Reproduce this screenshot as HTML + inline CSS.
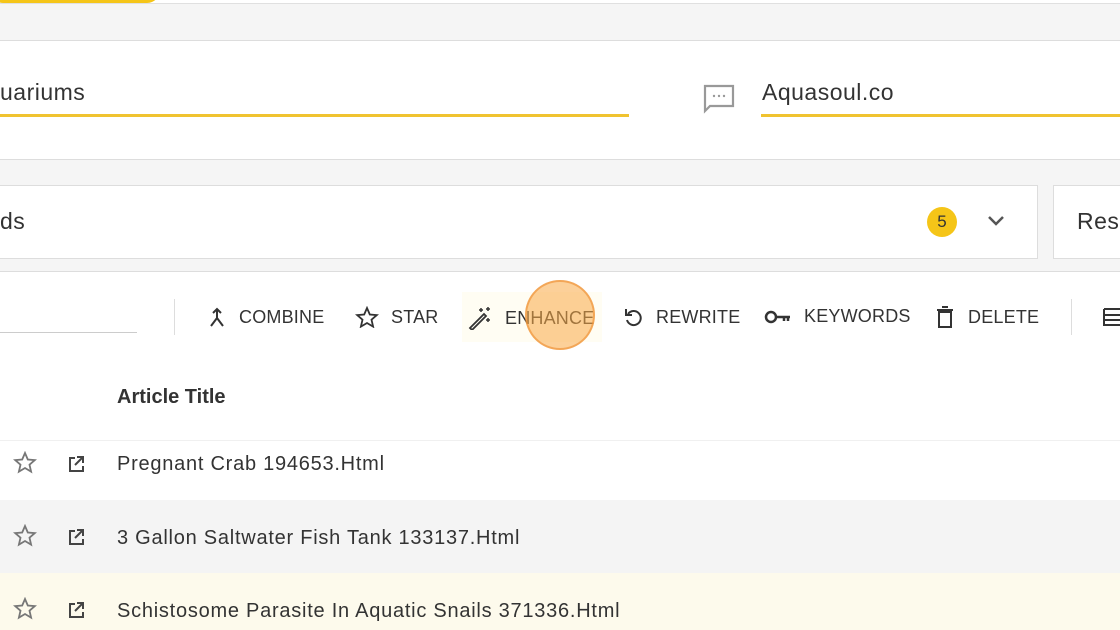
<!DOCTYPE html>
<html><head><style>
body{margin:0;width:1120px;height:630px;overflow:hidden;background:#fff;font-family:"Liberation Sans",sans-serif;color:#333;position:relative}
.a{position:absolute}
.btn{position:absolute;top:306px;font-size:18px;color:#333;display:flex;align-items:center;gap:12px;letter-spacing:0.2px}
.big{font-size:23px;letter-spacing:0.5px}
.row{font-size:20px;letter-spacing:0.75px}
svg{display:block}
</style></head><body>
<div class="a" style="left:0;width:1120px;background:#f5f5f5;border-top:1px solid #e0e0e0;border-bottom:1px solid #ddd;box-sizing:border-box;top:3px;height:38px"></div>
<div class="a" style="left:-10px;top:-10px;width:170px;height:13px;background:#f5c518;border-radius:0 0 40px 40px"></div>
<div class="a big" style="left:0;top:79px">uariums</div>
<div class="a" style="left:0;top:114px;width:629px;height:3px;background:#f0c330"></div>
<svg class="a" style="left:703px;top:84px" width="32" height="30" viewBox="0 0 32 30"><path d="M2 2h28v20H7l-5 5z" fill="none" stroke="#999" stroke-width="2.2"/><circle cx="11" cy="12" r="1.2" fill="#999"/><circle cx="16" cy="12" r="1.2" fill="#999"/><circle cx="21" cy="12" r="1.2" fill="#999"/></svg>
<div class="a big" style="left:762px;top:79px">Aquasoul.co</div>
<div class="a" style="left:761px;top:114px;width:360px;height:3px;background:#f0c330"></div>
<div class="a" style="left:0;top:159px;width:1120px;height:113px;background:#f5f5f5;border-top:1px solid #ddd;border-bottom:1px solid #ddd;box-sizing:border-box"></div>
<div class="a" style="left:-2px;top:185px;width:1040px;height:74px;background:#fff;border:1px solid #ddd;box-sizing:border-box"></div>
<div class="a" style="left:1053px;top:185px;width:80px;height:74px;background:#fff;border:1px solid #ddd;box-sizing:border-box"></div>
<div class="a big" style="left:0;top:208px">ds</div>
<div class="a big" style="left:1077px;top:208px">Res</div>
<div class="a" style="left:927px;top:207px;width:30px;height:30px;border-radius:50%;background:#f5c518;font-size:17px;text-align:center;line-height:30px">5</div>
<svg class="a" style="left:986px;top:214px" width="20" height="14"><path d="M3 3l7 7 7-7" fill="none" stroke="#555" stroke-width="2.5"/></svg>
<div class="a" style="left:0;top:332px;width:137px;height:1px;background:#ccc"></div>
<div class="a" style="left:174px;top:299px;width:1px;height:36px;background:#ddd"></div>
<div class="a" style="left:1071px;top:299px;width:1px;height:36px;background:#ddd"></div>
<div class="a" style="left:462px;top:292px;width:140px;height:50px;background:#fffdf3"></div>
<div class="btn" style="left:207px"><svg width="20" height="22"><path d="M10 4v8l-6 8M10 12l6 8M6 7l4-4 4 4" fill="none" stroke="#333" stroke-width="2"/></svg>COMBINE</div>
<div class="btn" style="left:355px"><svg width="24" height="22"><path d="M12 2l2.8 6.5 7 .6-5.3 4.6 1.6 6.9L12 17l-6.1 3.6 1.6-6.9L2.2 9.1l7-.6z" fill="none" stroke="#333" stroke-width="1.8"/></svg>STAR</div>
<div class="btn" style="left:467px"><svg width="26" height="24"><path d="M3 22L17 8l2 2L5 24z" fill="none" stroke="#333" stroke-width="1.8"/><path d="M14 2v4M12 4h4M21 1v4M19 3h4M21 12v4M19 14h4" stroke="#333" stroke-width="1.5"/></svg>ENHANCE</div>
<div class="btn" style="left:622px"><svg width="22" height="22"><path d="M6 8a7 7 0 1 1 -1 6" fill="none" stroke="#333" stroke-width="2"/><path d="M4 3v6h6" fill="none" stroke="#333" stroke-width="2"/></svg>REWRITE</div>
<div class="btn" style="left:764px"><svg width="28" height="16"><circle cx="7" cy="8" r="5" fill="none" stroke="#333" stroke-width="2.5"/><path d="M12 8h14M20 8v4M24 8v4" stroke="#333" stroke-width="2.5"/></svg>KEYWORDS</div>
<div class="btn" style="left:934px"><svg width="22" height="22"><path d="M5 6h12v15H5zM3 4h16M8 1h6" fill="none" stroke="#333" stroke-width="2"/></svg>DELETE</div>
<svg class="a" style="left:1102px;top:307px" width="20" height="20"><path d="M2 2h18M2 2v16h18M2 8h18M2 13h18" fill="none" stroke="#333" stroke-width="2"/></svg>
<div class="a" style="left:525px;top:280px;width:70px;height:70px;border-radius:50%;background:rgba(250,170,70,0.55);border:2px solid rgba(240,150,60,0.7);box-sizing:border-box"></div>
<div class="a" style="left:117px;top:386px;font-size:20px;font-weight:bold;color:#333">Article Title</div>
<div class="a" style="left:0;top:440px;width:1120px;height:60px;background:#fff;border-top:1px solid #f0f0f0"></div>
<div class="a" style="left:0;top:500px;width:1120px;height:73px;background:#f4f4f4"></div>
<div class="a" style="left:0;top:573px;width:1120px;height:57px;background:#fdfaec"></div>
<div class="a row" style="left:117px;top:453px">Pregnant Crab 194653.Html</div>
<div class="a row" style="left:117px;top:527px">3 Gallon Saltwater Fish Tank 133137.Html</div>
<div class="a row" style="left:117px;top:600px">Schistosome Parasite In Aquatic Snails 371336.Html</div>
<svg width="0" height="0" style="position:absolute"><defs><g id="st"><path d="M12 2l2.8 6.5 7 .6-5.3 4.6 1.6 6.9L12 17l-6.1 3.6 1.6-6.9L2.2 9.1l7-.6z" fill="none" stroke="#777" stroke-width="1.8"/></g><g id="ex"><path d="M8 3H3v13h13v-5M10 2h6v6M16 2L8 10" fill="none" stroke="#444" stroke-width="2"/></g></defs></svg>
<svg class="a" style="left:13px;top:451px" width="24" height="24"><use href="#st"/></svg>
<svg class="a" style="left:13px;top:524px" width="24" height="24"><use href="#st"/></svg>
<svg class="a" style="left:13px;top:597px" width="24" height="24"><use href="#st"/></svg>
<svg class="a" style="left:67px;top:455px" width="18" height="18"><use href="#ex"/></svg>
<svg class="a" style="left:67px;top:528px" width="18" height="18"><use href="#ex"/></svg>
<svg class="a" style="left:67px;top:601px" width="18" height="18"><use href="#ex"/></svg>
</body></html>
